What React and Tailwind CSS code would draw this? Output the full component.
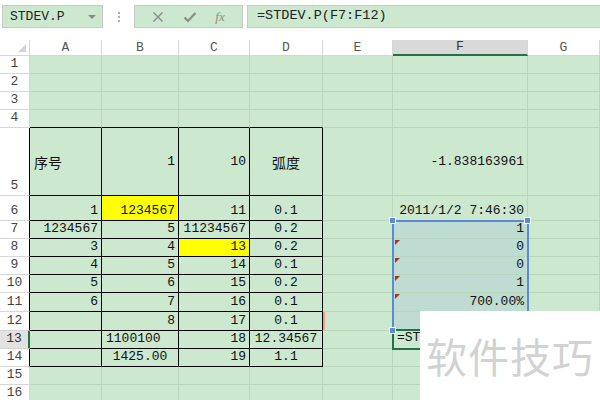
import React from 'react';

const MONO = { fontFamily: "'Liberation Mono', 'Noto Sans CJK SC', monospace" };
const CJK = { fontFamily: "'Noto Sans CJK SC', 'Noto Sans', sans-serif" };

const colLetters = ['A', 'B', 'C', 'D', 'E', 'F', 'G'];

// each cell: [text, align, flags...]
// align: l / r / c
const rows = [
  { n: 1, cells: [] },
  { n: 2, cells: [] },
  { n: 3, cells: [] },
  { n: 4, cells: [] },
  {
    n: 5,
    mid: true,
    cells: [['序号', 'l', 'cjk'], ['1', 'r'], ['10', 'r'], ['弧度', 'c', 'cjk'], null, ['-1.838163961', 'r']],
  },
  {
    n: 6,
    cells: [['1', 'r'], ['1234567', 'r', 'yellow'], ['11', 'r'], ['0.1', 'c'], null, ['2011/1/2 7:46:30', 'r']],
  },
  { n: 7, cells: [['1234567', 'r'], ['5', 'r'], ['11234567', 'r'], ['0.2', 'c'], null, ['1', 'r', 'sel']] },
  { n: 8, cells: [['3', 'r'], ['4', 'r'], ['13', 'r', 'yellow'], ['0.2', 'c'], null, ['0', 'r', 'sel', 'err']] },
  { n: 9, cells: [['4', 'r'], ['5', 'r'], ['14', 'r'], ['0.1', 'c'], null, ['0', 'r', 'sel', 'err']] },
  { n: 10, cells: [['5', 'r'], ['6', 'r'], ['15', 'r'], ['0.2', 'c'], null, ['1', 'r', 'sel', 'err']] },
  { n: 11, cells: [['6', 'r'], ['7', 'r'], ['16', 'r'], ['0.1', 'c'], null, ['700.00%', 'r', 'sel', 'err']] },
  { n: 12, cells: [null, ['8', 'r'], ['17', 'r'], ['0.1', 'c'], null, ['', 'r', 'sel']] },
  { n: 13, active: true, cells: [null, ['1100100', 'l'], ['18', 'r'], ['12.34567', 'c']] },
  { n: 14, cells: [null, ['1425.00', 'c'], ['19', 'r'], ['1.1', 'c']] },
  { n: 15, cells: [] },
  { n: 16, cells: [] },
];

function Cell({ data, row, col }) {
  const inTable = row.n >= 5 && row.n <= 14 && col <= 3;
  const aboveTable = row.n === 4 && col <= 3;
  const text = data ? data[0] : '';
  const align = data ? data[1] : 'r';
  const flags = data ? data.slice(2) : [];
  const yellow = flags.includes('yellow');
  const sel = flags.includes('sel');
  const err = flags.includes('err');
  const cjk = flags.includes('cjk');

  const justify = align === 'l' ? 'justify-start pl-1' : align === 'c' ? 'justify-center' : 'justify-end pr-[3px]';

  return (
    <div
      className={[
        'relative flex overflow-visible whitespace-nowrap border-r border-b text-[13px] leading-4 text-[#111]',
        row.mid ? 'items-center' : 'items-end pb-px',
        justify,
        inTable ? 'border-r-black border-b-black' : 'border-r-[#b8d6bb] border-b-[#b8d6bb]',
        aboveTable ? 'border-b-black' : '',
        yellow ? 'bg-[#ffff00]' : sel ? 'bg-[#bedcd2]' : 'bg-[#cce8cf]',
      ].join(' ')}
      style={cjk ? { ...CJK, fontSize: 14 } : MONO}
    >
      {err && (
        <span className="absolute left-[2px] top-px h-0 w-0 border-t-[5px] border-r-[5px] border-t-[#b32a2a] border-r-transparent" />
      )}
      {text}
    </div>
  );
}

function XIcon() {
  return (
    <svg width="12" height="12" viewBox="0 0 12 12">
      <path d="M1.5 1.5 L10.5 10.5 M10.5 1.5 L1.5 10.5" stroke="#8c8c8c" strokeWidth="1.4" fill="none" />
    </svg>
  );
}

function CheckIcon() {
  return (
    <svg width="14" height="12" viewBox="0 0 14 12">
      <path d="M1.5 6.5 L5 10 L12.5 2" stroke="#8c8c8c" strokeWidth="2.2" fill="none" />
    </svg>
  );
}

export default function App() {
  return (
    <div className="relative h-[400px] w-[600px] overflow-hidden bg-white" style={MONO}>
      {/* formula toolbar */}
      <div className="flex h-10 items-start gap-0 pt-[5px] pl-[2px]">
        <div className="flex h-[23px] w-[101px] items-center justify-between border border-[#c8c8c8] bg-[#cce8cf] pl-[7px] pr-[6px] text-[13px] text-[#222]">
          <span>STDEV.P</span>
          <span className="h-0 w-0 border-x-[4px] border-t-[4px] border-x-transparent border-t-[#888]" />
        </div>
        <div className="flex h-[23px] w-[31px] flex-col items-center justify-center gap-[2px]">
          <span className="h-[2px] w-[2px] bg-[#b0b0b0]" />
          <span className="h-[2px] w-[2px] bg-[#b0b0b0]" />
          <span className="h-[2px] w-[2px] bg-[#b0b0b0]" />
        </div>
        <div className="flex h-[23px] w-[109px] items-center justify-around border border-[#c8c8c8] bg-[#cce8cf] px-2">
          <XIcon />
          <CheckIcon />
          <span className="text-[13px] italic text-[#8c8c8c]" style={{ fontFamily: "'Liberation Serif', serif" }}>
            fx
          </span>
        </div>
        <div className="ml-1 flex h-[23px] flex-1 items-center border border-r-0 border-[#c8c8c8] bg-[#cce8cf] pl-[9px] text-[13.5px] text-[#222]">
          =STDEV.P(F7:F12)
        </div>
      </div>

      {/* sheet */}
      <div className="grid grid-cols-[30px_72px_77px_71px_73px_70px_135px_72px] grid-rows-[16px_18px_18px_18px_18px_68px_25px_18px_18px_18px_18px_19px_19px_18px_18px_18px_18px]">
        <div className="relative border-r border-b border-[#d6d6d6] bg-white">
          <span className="absolute right-[3px] bottom-[3px] h-0 w-0 border-b-[8px] border-l-[8px] border-b-[#d4d4d4] border-l-transparent" />
        </div>
        {colLetters.map((c) => (
          <div
            key={c}
            className={
              c === 'F'
                ? 'flex items-center justify-center border-r border-[#d6d6d6] border-b-2 border-b-[#217346] bg-[#d9d9d9] text-[13px] text-[#333]'
                : 'flex items-center justify-center border-r border-b border-[#d6d6d6] bg-white text-[13px] text-[#555]'
            }
          >
            {c}
          </div>
        ))}
        {rows.map((row) => (
          <React.Fragment key={row.n}>
            <div
              className={[
                'flex items-end justify-center border-b border-b-[#d6d6d6] pb-px text-[13px] leading-4',
                row.active ? 'border-r-2 border-r-[#217346] bg-[#e2e2e2] text-[#333]' : 'border-r bg-white text-[#444]',
                !row.active && row.n >= 5 && row.n <= 14 ? 'border-r-black' : !row.active ? 'border-r-[#d6d6d6]' : '',
              ].join(' ')}
            >
              {row.n}
            </div>
            {colLetters.map((c, i) => (
              <Cell key={c} data={row.cells[i]} row={row} col={i} />
            ))}
          </React.Fragment>
        ))}
      </div>

      {/* selection F7:F12 */}
      <div className="pointer-events-none absolute left-[392px] top-[220px] h-[111px] w-[137px] border-2 border-[#5b8bd4]" />
      <span className="absolute left-[389px] top-[217px] h-[7px] w-[7px] border border-white bg-[#5b8bd4]" />
      <span className="absolute left-[524px] top-[217px] h-[7px] w-[7px] border border-white bg-[#5b8bd4]" />

      {/* active cell F13, being edited (rest hidden by watermark) */}
      <div className="absolute left-[392px] top-[329px] flex h-[21px] w-[28px] items-end border-2 border-r-0 border-[#217346] bg-[#cce8cf] pb-px pl-[3px] text-[13px] text-[#111]">
        =ST
      </div>
      <span className="absolute left-[389px] top-[327px] h-[7px] w-[7px] border border-white bg-[#5b8bd4]" />

      {/* orange marker at D12 edge */}
      <span className="absolute left-[323px] top-[312px] h-[18px] w-[2px] bg-[#f4a07c]" />

      {/* watermark */}
      <div className="absolute left-[420px] top-[311px] flex h-[89px] w-[180px] items-center justify-start bg-white pl-[6px]">
        <span className="text-[41px] leading-none tracking-[1px] text-[#d2d2d2]" style={CJK}>
          软件技巧
        </span>
      </div>
    </div>
  );
}
